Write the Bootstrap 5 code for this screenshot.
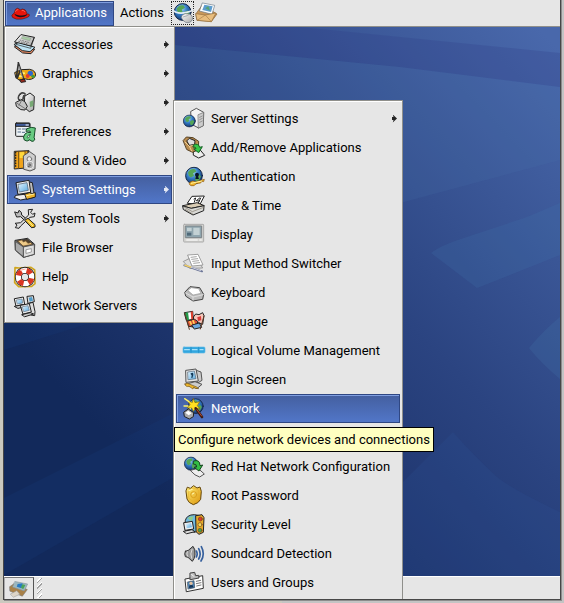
<!DOCTYPE html>
<html lang="en">
<head>
<meta charset="utf-8">
<meta name="viewport" content="width=device-width, initial-scale=1">
<title>Desktop</title>
<link href="https://cdn.jsdelivr.net/npm/bootstrap@5.3.0/dist/css/bootstrap.min.css" rel="stylesheet">
<style>
  :root { --face: #e6e6e6; --edge: #8f8f8b; }
  body { font-family: Roboto, "Open Sans", sans-serif; font-size: 13px; line-height: 20px; color: #000; padding: 0 4px 4px; background: linear-gradient(90deg, #cbc9bf 50%, #c4c4c4 50%); }
  .screen { background: #12295b; box-shadow: 0 0 0 1px #474747, 1px 1px 0 1px #8c8c8c; }
  .screen-clip { overflow: hidden; }
  .panel-top { background: var(--face); height: 27px; border-bottom: 1px solid var(--edge); padding: 0 1px; }
  .panel-bottom { background: var(--face); height: 23px; border-top: 1px solid #fff; }
  .plain { background: none; border: 0; padding: 0; color: #000; }
  .apps-btn { height: 25px; padding: 0 6px 0 5px; gap: 5px; }
  .apps-btn .pic { width: 19px; height: 19px; }
  .actions-btn { margin: 0 7px 0 6px; }
  .web-btn { border: 1px dotted #222; width: 23px; height: 24px; }
  .menu-box { background: var(--face); border: 1px solid var(--edge); padding: 3px 2px 2px; box-shadow: inset 1px 1px 0 #fff; margin: 0; list-style: none; }
  .menu-main { width: 171px; }
  .menu-sub { width: 230px; margin: 74px 0 0 -2px; }
  .menu-wrap { top: 26px; left: 0; }
  .entry { display: flex; align-items: center; gap: 5px; width: 100%; height: 29px; padding: 0 2px 0 5px; border: 1px solid transparent; background: none; color: #000; text-align: left; white-space: nowrap; }
  .more::after { content: ""; width: 5px; height: 8px; margin-left: auto; background: currentColor; opacity: .85; clip-path: polygon(15% 0, 100% 50%, 15% 100%, 30% 70%, 0 70%, 0 30%, 30% 30%); }
  .lit { background: linear-gradient(#445f9f, #5176c8); border: 1px solid #2f4783; box-shadow: inset 1px 1px 0 #7f9ee0; color: #fff; }
  .slot { height: 29px; position: relative; }
  .tip { position: absolute; left: -2px; top: 4px; bottom: 0; width: max-content; background: #ffffc0; border: 1px solid #000; padding: 2px 3px; }
  .pic { width: 24px; height: 24px; flex: none; stroke: #222; stroke-width: 3; stroke-linejoin: round; stroke-linecap: round; fill: none; }
  .tray-btn { width: 30px; border: 1px solid #777; border-left-color: #aaa; border-right: 1px solid #555; border-bottom: 0; }
  .tray-btn .pic { width: 20px; height: 20px; }
  .grip { width: 5px; margin: 1px 0 1px 3px; background: repeating-linear-gradient(135deg, transparent 0 2px, #fff 2px 3px, #a2a2a2 3px 4px); }
</style>
<script src="https://cdn.jsdelivr.net/npm/bootstrap@5.3.0/dist/js/bootstrap.bundle.min.js"></script>
</head>
<body class="vh-100 d-flex flex-column">
<svg width="0" height="0" class="position-absolute" aria-hidden="true">
  <defs>
    <radialGradient id="sea" cx=".4" cy=".3" r=".8"><stop offset="0" stop-color="#a9dcf5"/><stop offset=".45" stop-color="#3279c4"/><stop offset="1" stop-color="#0c2456"/></radialGradient>
    <linearGradient id="glass" x2="1" y2="1"><stop offset="0" stop-color="#e4f5ff"/><stop offset="1" stop-color="#58a9df"/></linearGradient>
    <linearGradient id="metal" x2="1" y2="1"><stop offset="0" stop-color="#fff"/><stop offset="1" stop-color="#a6a6a6"/></linearGradient>
    <linearGradient id="gold" x2="1" y2="1"><stop offset="0" stop-color="#fff079"/><stop offset="1" stop-color="#dc9208"/></linearGradient>
    <symbol id="globe" viewBox="0 0 40 40"><circle cx="20" cy="20" r="18" fill="url(#sea)" stroke="#10203c" stroke-width="2"/><path d="M7 13Q13 4 22 6L25 11 18 15 20 20 13 24 9 20ZM23 20L31 17 35 22 30 31 24 33 22 26Z" fill="#55a556" stroke="none"/></symbol>
  </defs>
</svg>
<div class="screen flex-grow-1 d-flex flex-column">
 <div class="screen-clip flex-grow-1 d-flex flex-column position-relative">
  <nav class="panel-top d-flex align-items-center" aria-label="Panel">
    <button type="button" class="plain lit apps-btn d-flex align-items-center">
      <svg class="pic" viewBox="0 0 72 72"><path d="M8 37Q-1 43 6 51 18 61 42 57 70 51 70 42 69 36 61 38L59 31Q55 19 43 19L36 22 25 16Q15 17 13 31Z" fill="#e8150c" stroke="#3a1010" stroke-width="2"/><path d="M13 36Q22 44 42 44 55 43 61 38L60 43Q50 51 34 50 15 48 13 36Z" fill="#18121c" stroke="none"/><path d="M17 28Q20 20 26 21M42 24Q50 23 53 29" stroke="#ff7060"/></svg>
      <span>Applications</span>
    </button>
    <button type="button" class="plain actions-btn">Actions</button>
    <button type="button" class="plain web-btn d-flex align-items-center justify-content-center" aria-label="Web browser">
      <svg class="pic" viewBox="0 0 72 72"><use href="#globe" x="7" y="5" width="56" height="56"/><path d="M4 26Q22 46 66 28" stroke="#e3edf5" stroke-width="5"/><path d="M33 43Q42 34 55 39 67 44 64 56 58 68 44 64 34 59 31 50Z" fill="url(#metal)" stroke="#68727c" stroke-width="2"/><path d="M36 48L49 44 55 40" stroke="#8b949b" stroke-width="2"/></svg>
    </button>
    <button type="button" class="plain d-flex" aria-label="Mail">
      <svg class="pic" viewBox="0 0 72 72"><path d="M6 38L25 12 69 39 52 62 10 58Z" fill="#c9975a" stroke="#8c6331" stroke-width="2"/><path d="M26 6L62 13 54 40 17 30Z" fill="#fff" stroke="#687888" stroke-width="2"/><path d="M31 11L56 16 51 33 25 27Z" fill="#5d9cce" stroke="none"/><path d="M34 22L43 15 48 29Z" fill="#58a46f" stroke="none"/><path d="M6 38L34 42 66 36 52 62 10 58Z" fill="#e8bd7e" stroke="#94703f" stroke-width="2"/><path d="M10 58L34 42 52 62" stroke="#a77c45" stroke-width="2"/></svg>
    </button>
  </nav>

  <main class="flex-grow-1 position-relative">
    <svg class="position-absolute w-100 h-100 d-block" viewBox="4 27 556 549" preserveAspectRatio="none" aria-hidden="true">
      <defs><linearGradient id="sky" gradientUnits="userSpaceOnUse" x1="110" y1="440" x2="540" y2="30"><stop offset="0" stop-color="#12295b"/><stop offset=".25" stop-color="#1f366f"/><stop offset=".5" stop-color="#2b4481"/><stop offset="1" stop-color="#4968ab"/></linearGradient></defs>
      <rect x="4" y="27" width="556" height="549" fill="url(#sky)"/>
      <path d="M175 27H300L400 37 560 53V87L400 67 175 45Z" fill="#2d3c84" opacity=".24"/>
      <path d="M175 45L400 67 560 87V160L400 203 175 262Z" fill="#4a78ae" opacity=".16"/>
      <path d="M431 253Q439 246 467 237L527 217 560 203V255L477 288Z" fill="#447bb0" opacity=".18"/>
      <path d="M560 317Q545 329 529 348 541 363 560 379Z" fill="#447bb0" opacity=".2"/>
      <path d="M400 485L453 432Q474 456 497 477 513 490 560 512V576H400Z" fill="#2c5298" opacity=".22"/>
      <path d="M4 323H90L4 350ZM4 498L174 413V477L4 575Z" fill="#153b7c" opacity=".22"/>
    </svg>
  </main>

  <footer class="panel-bottom d-flex">
    <button type="button" class="plain tray-btn d-flex align-items-center justify-content-center" aria-label="Show desktop">
      <svg class="pic" viewBox="0 0 72 72"><path d="M2 28L18 17 66 38 48 62 4 44Z" fill="#a98148" stroke="#777" stroke-width="2"/><path d="M22 9L67 18 55 43 13 29Z" fill="#9bb7c0" stroke="#83909a" stroke-width="2"/><path d="M31 18L49 15 45 33 28 28Z" fill="#287ac3" stroke="none"/><path d="M48 19L59 22 51 37 43 31Z" fill="#4da358" stroke="none"/><path d="M6 54L28 42 39 55 17 65Z" fill="#ddd5c8" stroke="#999" stroke-width="2"/></svg>
    </button>
    <div class="grip"></div>
  </footer>

  <div class="menu-wrap position-absolute d-flex align-items-start">
    <ul class="menu-box menu-main">
      <li><button type="button" class="entry more"><svg class="pic" viewBox="0 0 72 72"><path d="M5 41L16 34 65 49 54 62 30 60Z" fill="#e78961"/><path d="M4 34L18 28 66 43 51 56 29 53Z" fill="#bde4f4"/><path d="M25 5L64 13 53 39 6 27Z" fill="url(#metal)"/><path d="M29 10L54 15 50 23 25 17Z" fill="#a9cca6" stroke="#777" stroke-width="1"/><path d="M21 21L46 28M17 25L42 32" stroke="#777" stroke-dasharray="3 5"/><path d="M6 27L9 34 53 46 64 13" stroke-width="2"/></svg>Accessories</button></li>
      <li><button type="button" class="entry more"><svg class="pic" viewBox="0 0 72 72"><path d="M6 31Q25 19 50 22 71 26 67 43 57 56 38 51 30 48 28 54 17 57 9 47Z" fill="#efa914"/><circle cx="52" cy="34" r="8" fill="#2d66cd" stroke="none"/><circle cx="44" cy="42" r="6" fill="#df3b32" stroke="none"/><circle cx="60" cy="43" r="5" fill="#3a9c3f" stroke="none"/><path d="M25 34h8M18 43h7" stroke="#fff379" stroke-width="6"/><path d="M16 2L33 54M16 5L10 47M22 24L13 48" stroke="#333" stroke-width="5"/><path d="M18 13L29 47" stroke="#b9b9b9" stroke-width="2"/><path d="M21 54L34 51 38 59 25 61Z" fill="#9c2819"/></svg>Graphics</button></li>
      <li><button type="button" class="entry more"><svg class="pic" viewBox="0 0 72 72"><path d="M36 15L51 6 64 16 62 56 49 62 35 50Z" fill="url(#metal)"/><path d="M50 32L61 28V45L51 49Z" fill="#77a874" stroke="none"/><path d="M28 28Q13 28 18 16 25 2 35 9L31 22" stroke="#444" stroke-width="7"/><path d="M24 27Q16 24 21 15 27 7 33 10" stroke="#eee"/><path d="M9 34L25 26Q37 28 43 46L36 57Q24 60 11 47Z" fill="#c5c5c5"/><path d="M11 36L38 54M26 28L18 43" stroke="#777"/></svg>Internet</button></li>
      <li><button type="button" class="entry more"><svg class="pic" viewBox="0 0 72 72"><rect x="8" y="9" width="43" height="40" rx="3" fill="#edf2f5"/><path d="M9 10H50V19H9Z" fill="#405d9c"/><path d="M15 27h8M15 36h8M28 27h15M28 37h7" stroke="#56708b"/><path d="M39 15h7" stroke="#fff"/><path d="M42 26Q55 19 67 24L63 54 66 57 61 64 54 63 51 59Q42 67 34 60 28 51 36 42 43 34 53 38 54 31 40 34Z" fill="#68cb82" stroke="#174c29"/><path d="M51 44Q43 44 42 53 48 57 51 44Z" fill="#e8f6ea" stroke="#174c29" stroke-width="2"/></svg>Preferences</button></li>
      <li><button type="button" class="entry more"><svg class="pic" viewBox="0 0 72 72"><path d="M5 7L48 5V56L5 60Z" fill="#f0a31a"/><path d="M17 7V59M36 6V50" stroke="#6b501b" stroke-width="3"/><path d="M8 10V57M45 8V26" stroke="#222" stroke-width="4" stroke-dasharray="2 6"/><path d="M20 10L34 9V27H20Z" fill="#ffd83c" stroke="none"/><path d="M32 20L50 8 67 20 66 60 51 66 33 61Z" fill="#cecece" stroke="#555"/><circle cx="49" cy="30" r="7" fill="#eee" stroke="#777"/><circle cx="50" cy="48" r="11" fill="#aaa" stroke="#eee"/><path d="M47 47Q51 41 53 49L46 53" stroke="#555"/></svg>Sound &amp; Video</button></li>
      <li><button type="button" class="entry more lit"><svg class="pic" viewBox="0 0 72 72"><path d="M9 52L50 47 64 58 23 66 5 59Z" fill="#eee"/><path d="M45 11L58 14 63 45 45 54Z" fill="#bbb"/><path d="M10 14L48 7 53 43 16 49Z" fill="#eee"/><path d="M16 19L42 14 46 37 20 42Z" fill="url(#glass)" stroke="#456" stroke-width="2"/><path d="M36 48L53 43 54 48 67 44V57L42 64Z" fill="#edb32a"/><path d="M41 53L63 48" stroke="#fff0a0"/></svg>System Settings</button></li>
      <li><button type="button" class="entry more"><svg class="pic" viewBox="0 0 72 72"><path d="M6 15L15 18 18 10 25 16 26 24 64 54 62 61 54 60 23 29 12 30Z" fill="#bbb"/><path d="M47 8L59 7 53 16 59 22 66 18 64 29 51 31 23 57 18 64 7 62 12 54 6 49 23 47 46 25Z" fill="#ddd"/><path d="M36 39L45 34 66 53 66 60 57 62Z" fill="#efbd25"/><path d="M46 42L59 56" stroke="#fff19b"/></svg>System Tools</button></li>
      <li><button type="button" class="entry"><svg class="pic" viewBox="0 0 72 72"><path d="M7 13L44 7 65 25 64 55 31 64 8 43Z" fill="#bbb"/><path d="M11 15L43 9 61 25 32 33Z" fill="#51412d" stroke-width="2"/><path d="M15 15L27 12 31 18 38 15 45 22 53 20 58 25 31 30Z" fill="#edc987" stroke="#735430" stroke-width="2"/><path d="M31 33L64 26V55L32 64Z" fill="#ddd" stroke="#555"/><path d="M8 17L31 33V62L8 43Z" fill="#aaa" stroke="#555"/><path d="M40 41L55 38V48L40 52Z" fill="#fff" stroke="#777" stroke-width="2"/></svg>File Browser</button></li>
      <li><button type="button" class="entry"><svg class="pic" viewBox="0 0 72 72"><path d="M6 8L18 9 54 7 65 15 66 56 56 64 17 65 5 53Z" stroke="#d0a51d" stroke-width="5"/><circle cx="36" cy="36" r="20" stroke="#222" stroke-width="21"/><circle cx="36" cy="36" r="20" stroke="#fff" stroke-width="16"/><circle cx="36" cy="36" r="20" stroke="#db3622" stroke-width="16" stroke-linecap="butt" stroke-dasharray="16 15.4" transform="rotate(12 36 36)"/><path d="M22 16L37 12" stroke="#ffa998"/></svg>Help</button></li>
      <li><button type="button" class="entry"><svg class="pic" viewBox="0 0 72 72"><path d="M43 7L61 5 64 23 46 28Z" fill="#ddd"/><path d="M47 11L57 9 60 20 50 23Z" fill="#4f9bc9" stroke="none"/><path d="M5 14L31 9 35 31 10 36Z" fill="#eee"/><path d="M11 18L27 15 29 27 14 30Z" fill="url(#glass)" stroke="#678" stroke-width="2"/><path d="M5 37L34 31 39 37 16 43Z" fill="#ccc"/><path d="M45 29L60 25 66 53 65 65 54 63Z" fill="#ddd"/><path d="M23 34L49 29 55 54 31 60Z" fill="#eee"/><path d="M29 38L45 35 49 49 33 53Z" fill="url(#glass)" stroke="#678" stroke-width="2"/><path d="M27 62L52 56 62 60 36 68Z" fill="#ccc"/></svg>Network Servers</button></li>
    </ul>

    <ul class="menu-box menu-sub">
      <li><button type="button" class="entry more"><svg class="pic" viewBox="0 0 72 72"><path d="M27 13L43 4 65 16 64 56 50 63 29 52Z" fill="#f4f4f4" stroke="#555"/><path d="M49 23L65 16 64 56 50 63Z" fill="#ccc" stroke="#666" stroke-width="2"/><path d="M53 31L61 27M53 38L61 34M53 46L61 42" stroke="#777" stroke-width="2"/><use href="#globe" x="2" y="22" width="40" height="40"/></svg>Server Settings</button></li>
      <li><button type="button" class="entry"><svg class="pic" viewBox="0 0 72 72"><path d="M35 47L53 40 68 58 50 66 35 58Z" fill="#eee"/><path d="M4 13L13 3 33 5 50 16 49 39 32 49 15 41Z" fill="#b98b4e" stroke="#554022"/><path d="M15 14L22 7 39 14 38 25 23 28Z" fill="#ddd"/><path d="M9 18L22 31 47 24M22 31L29 45" stroke="#f1d094"/><path d="M35 27Q49 19 53 34L61 32 50 50 35 39 42 38Q41 31 34 33Z" fill="#36c948" stroke="#126022"/></svg>Add/Remove Applications</button></li>
      <li><button type="button" class="entry"><svg class="pic" viewBox="0 0 72 72"><use href="#globe" x="8" y="4" width="56" height="56"/><circle cx="45" cy="29" r="6" fill="#08142d" stroke="none"/><path d="M43 31L40 42H51L47 31Z" fill="#08142d" stroke="none"/><path d="M25 51Q32 45 41 50L67 43 65 50 59 49 56 54 42 56Q38 65 27 62 17 57 25 51Z" fill="#efb32a" stroke="#885716" stroke-width="2"/><path d="M28 55L59 48" stroke="#fff3a0"/></svg>Authentication</button></li>
      <li><button type="button" class="entry"><svg class="pic" viewBox="0 0 72 72"><path d="M31 7L67 6 54 31 17 28Z" fill="#fff"/><path d="M36 15L41 12 37 24M53 12L43 20 52 21M56 12L49 27" stroke="#222"/><path d="M3 35L45 26 67 35 28 43Z" fill="#d9ccb4"/><path d="M3 36L28 43 66 35 65 50 33 63 5 47Z" fill="#d8d8d5"/><path d="M7 39L31 53 65 40M10 46L32 60" stroke="#82796a" stroke-width="2"/></svg>Date &amp; Time</button></li>
      <li><button type="button" class="entry"><svg class="pic" viewBox="0 0 72 72"><rect x="5" y="4" width="60" height="53" rx="2" fill="#d7d7d4" stroke="#aaa"/><rect x="11" y="9" width="48" height="35" fill="#8fa5ae" stroke="#7b8286"/><path d="M15 14H29V24H15ZM34 14H53V36H34Z" fill="#c3d1d4" stroke="none"/><path d="M15 29H28V38H15Z" fill="#4f6979" stroke="none"/><path d="M14 51H46M53 51h5" stroke="#fff"/></svg>Display</button></li>
      <li><button type="button" class="entry"><svg class="pic" viewBox="0 0 72 72"><g stroke="#777" stroke-width="2"><path d="M5 28L39 11 62 48 24 49Z" fill="#ddd"/><path d="M18 9L48 7 63 39 31 42Z" fill="#fff"/><path d="M27 16L43 14M29 22L47 20M32 28L50 26M35 34L53 32"/></g><path d="M7 40L60 58" stroke="#6b7597" stroke-width="6"/><path d="M9 40L27 46" stroke="#eccb66" stroke-width="5"/><path d="M28 46L56 56" stroke="#c9ccdc" stroke-width="3"/></svg>Input Method Switcher</button></li>
      <li><button type="button" class="entry"><svg class="pic" viewBox="0 0 72 72"><path d="M9 33L24 17 53 20 65 40 62 55 33 60 12 46Z" fill="#bbb" stroke="#444"/><path d="M18 28L28 20 50 23 57 37 34 42Z" fill="#fff" stroke="#999" stroke-width="2"/><path d="M11 36L33 48 64 41M33 48V58" stroke="#eee" stroke-width="2"/></svg>Keyboard</button></li>
      <li><button type="button" class="entry"><svg class="pic" viewBox="0 0 72 72"><path d="M8 8L32 4 34 28 14 31Z" fill="#fff"/><path d="M8 9L18 7 21 30 14 31Z" fill="#249c4c" stroke="none"/><path d="M26 5L32 4 34 28 28 29Z" fill="#dc402e" stroke="none"/><path d="M35 20L41 12 51 14 62 8 66 17 62 43 50 38 37 43Z" fill="#f5c7bb"/><path d="M46 22L57 18 58 31 48 33Z" fill="#d83c3a" stroke="none"/><path d="M16 33L38 28 48 35 39 52 21 49Z" fill="#df5136"/><path d="M24 35L28 43M33 32L37 42" stroke="#ffd15c" stroke-width="5"/><path d="M30 45L52 39 59 52 38 57Z" fill="#6ba7dc"/><path d="M8 9L22 58M66 18L55 57" stroke="#5e3824" stroke-width="3"/></svg>Language</button></li>
      <li><button type="button" class="entry"><svg class="pic" viewBox="0 0 72 72"><rect x="3" y="24" width="66" height="18" rx="3" fill="#32a6df" stroke="#65bce5" stroke-width="2"/><path d="M8 32H22M31 32H45M54 32H63" stroke="#a7e2fa" stroke-width="4"/><path d="M27 25V41M50 25V41" stroke="#1f8cc2" stroke-width="2"/></svg>Logical Volume Management</button></li>
      <li><button type="button" class="entry"><svg class="pic" viewBox="0 0 72 72"><path d="M43 7L57 12 60 37 47 45Z" fill="#ccc" stroke="#555"/><path d="M12 7L42 3 49 39 13 43Z" fill="#e4e4e4" stroke="#555"/><path d="M18 12L37 9 42 32 19 35Z" fill="url(#glass)" stroke="#567" stroke-width="2"/><path d="M25 17Q35 10 34 21L31 30H28L29 22Z" fill="#123957" stroke="none"/><path d="M10 49L39 41 60 49 46 61Z" fill="#ccc" stroke="#555"/><path d="M9 48Q15 43 24 49L44 57 50 62 41 61 35 58 33 63 21 55Q10 58 9 48Z" fill="#ebb52c" stroke="#76561b" stroke-width="2"/></svg>Login Screen</button></li>
      <li><button type="button" class="entry lit" aria-describedby="net-tip"><svg class="pic" viewBox="0 0 72 72"><use href="#globe" x="17" y="3" width="49" height="49"/><path d="M34 5L39 17 53 14 46 26 54 36 41 34 34 43 29 33 15 33 24 23 17 11 30 16Z" fill="#ffdf21" stroke="#80630c" stroke-width="2"/><path d="M8 5L21 14M6 27H18M16 42L25 35" stroke="#fff36a" stroke-width="4"/><path d="M41 34L60 60" stroke="#3b1b12" stroke-width="8"/><path d="M45 38L59 57" stroke="#b74a30" stroke-width="3"/><path d="M6 45L19 36 35 47 34 59 22 66 8 59Z" fill="#aaa"/><path d="M10 47L19 41 29 49 20 55Z" fill="#fff" stroke="none"/></svg>Network</button></li>
      <li class="slot"><div class="tip" role="tooltip" id="net-tip">Configure network devices and connections</div></li>
      <li><button type="button" class="entry"><svg class="pic" viewBox="0 0 72 72"><use href="#globe" x="5" y="4" width="44" height="44"/><path d="M26 46L48 40 67 57 53 66 40 60Z" fill="#eee" stroke="#555"/><path d="M35 18Q54 12 54 32L62 30 51 48 36 37 44 36Q44 26 35 27Z" fill="#32bd43" stroke="#15451e"/></svg>Red Hat Network Configuration</button></li>
      <li><button type="button" class="entry"><svg class="pic" viewBox="0 0 72 72"><path d="M17 10L25 13 35 5 45 12 54 9 58 22 56 46Q50 58 34 62 19 57 15 45L12 22Z" fill="url(#gold)" stroke="#65470c"/><path d="M21 18L35 12 49 18 50 42 35 54 21 43Z" stroke="#e5b02e" stroke-width="2"/><circle cx="35" cy="32" r="9" stroke="#dca01c"/><path d="M20 20L31 16M31 30L36 27" stroke="#fff9ba"/></svg>Root Password</button></li>
      <li><button type="button" class="entry"><svg class="pic" viewBox="0 0 72 72"><path d="M10 22Q14 5 37 5L55 8V50L38 58 12 50Z" fill="#6fb9de"/><path d="M17 16Q23 9 35 11L28 24Z" fill="#8fcc88" stroke="none"/><path d="M42 8L60 5 66 14 64 58 51 64 43 57Z" fill="#e6a928"/><circle cx="55" cy="18" r="6" fill="#dc392c" stroke="#742" stroke-width="2"/><circle cx="54" cy="35" r="6" fill="#f5dd59" stroke="#742" stroke-width="2"/><circle cx="54" cy="52" r="6" fill="#43a547" stroke="#742" stroke-width="2"/><path d="M6 29L31 25 35 48 10 52Z" fill="#eee"/><path d="M12 33L27 30 30 43 14 46Z" fill="url(#glass)" stroke="none"/><path d="M5 55L30 50 39 56 15 62Z" fill="#ddd"/></svg>Security Level</button></li>
      <li><button type="button" class="entry"><svg class="pic" viewBox="0 0 72 72"><path d="M10 28L19 25 33 13Q41 21 39 39 37 52 31 58L18 46 10 44Q6 35 10 28Z" fill="#999" stroke="#333"/><path d="M16 29Q12 36 17 43M30 22Q23 36 29 49" stroke="#ddd"/><path d="M43 27Q48 36 43 45M50 20Q59 36 50 51M58 14Q70 36 57 57" stroke="#355f9d" stroke-width="5"/></svg>Soundcard Detection</button></li>
      <li><button type="button" class="entry"><svg class="pic" viewBox="0 0 72 72"><path d="M10 24L62 14 64 52 14 62Z" fill="#fff" stroke="#333"/><path d="M25 6L38 4 41 14 50 13 51 21 25 26Z" fill="#bbb" stroke="#444"/><path d="M29 10L35 16" stroke="#fff"/><path d="M17 33L36 29 38 50 19 54Z" fill="#4f83b1" stroke="#345" stroke-width="2"/><circle cx="27" cy="37" r="5" fill="#e5c2a0" stroke="none"/><path d="M20 51L23 43 31 42 35 49Z" fill="#133256" stroke="none"/><path d="M43 31L56 28M43 38L57 35M44 45L57 42" stroke="#777"/></svg>Users and Groups</button></li>
    </ul>
  </div>
 </div>
</div>
</body>
</html>
